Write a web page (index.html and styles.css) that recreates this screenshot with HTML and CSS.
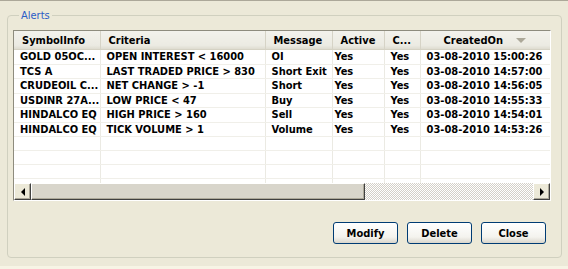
FILE: index.html
```html
<!DOCTYPE html>
<html lang="en">
<head>
  <meta charset="UTF-8">
  <title>Alerts</title>
  <link rel="stylesheet" href="styles.css">
</head>
<body>
  <div class="window">
    <fieldset class="group">
      <legend>Alerts</legend>
      <div class="grid">
        <div class="grid-body">
          <table class="alerts">
            <colgroup>
              <col class="c-sym"><col class="c-crit"><col class="c-msg"><col class="c-act"><col class="c-c"><col class="c-date">
            </colgroup>
            <thead>
              <tr>
                <th>SymbolInfo</th>
                <th>Criteria</th>
                <th>Message</th>
                <th class="center">Active</th>
                <th>C...</th>
                <th class="center">CreatedOn <span class="sort"></span></th>
              </tr>
            </thead>
            <tbody>
              <tr><td>GOLD 05OC...</td><td>OPEN INTEREST &lt; 16000</td><td>OI</td><td class="tight">Yes</td><td>Yes</td><td>03-08-2010 15:00:26</td></tr>
              <tr><td>TCS A</td><td>LAST TRADED PRICE &gt; 830</td><td>Short Exit</td><td class="tight">Yes</td><td>Yes</td><td>03-08-2010 14:57:00</td></tr>
              <tr><td>CRUDEOIL C...</td><td>NET CHANGE &gt; -1</td><td>Short</td><td class="tight">Yes</td><td>Yes</td><td>03-08-2010 14:56:05</td></tr>
              <tr><td>USDINR 27A...</td><td>LOW PRICE &lt; 47</td><td>Buy</td><td class="tight">Yes</td><td>Yes</td><td>03-08-2010 14:55:33</td></tr>
              <tr><td>HINDALCO EQ</td><td>HIGH PRICE &gt; 160</td><td>Sell</td><td class="tight">Yes</td><td>Yes</td><td>03-08-2010 14:54:01</td></tr>
              <tr><td>HINDALCO EQ</td><td>TICK VOLUME &gt; 1</td><td>Volume</td><td class="tight">Yes</td><td>Yes</td><td>03-08-2010 14:53:26</td></tr>
              <tr class="empty"><td></td><td></td><td></td><td></td><td></td><td></td></tr>
              <tr class="empty"><td></td><td></td><td></td><td></td><td></td><td></td></tr>
              <tr class="empty"><td></td><td></td><td></td><td></td><td></td><td></td></tr>
              <tr class="empty"><td></td><td></td><td></td><td></td><td></td><td></td></tr>
            </tbody>
          </table>
        </div>
        <div class="hscroll">
          <div class="sb-btn"><span class="arrow-left"></span></div>
          <div class="sb-thumb"></div>
          <div class="sb-track"></div>
          <div class="sb-btn"><span class="arrow-right"></span></div>
        </div>
      </div>
      <div class="actions">
        <button class="btn">Modify</button>
        <button class="btn">Delete</button>
        <button class="btn">Close</button>
      </div>
    </fieldset>
  </div>
</body>
</html>
```

FILE: styles.css
```css
body {
  margin: 0;
  background-color: #ece9d8;
  font-family: 'DejaVu Sans Condensed', 'DejaVu Sans', sans-serif;
  font-size: 11px;
  color: #000;
}
.window {
  height: 269px;
  box-sizing: border-box;
  border-top: 1px solid #aca899;
  border-bottom: 3px solid #f7f4e5;
  padding: 8px 10px 8px 7px;
}
.group {
  height: 100%;
  box-sizing: border-box;
  margin: 0;
  padding: 0 10px 0 5px;
  border: 1px solid #d0d0bf;
  border-radius: 4px;
  display: flex;
  flex-direction: column;
}
.group legend {
  color: #2a5cc6;
  padding: 0 2px;
  margin-left: 6px;
  line-height: 13px;
}
.grid {
  margin-top: 8px;
  border: 1px solid;
  border-color: #8e8c7e #fff #fff #8e8c7e;
  background: #fff;
  width: 536px;
}
.grid-body {
  height: 152px;
  overflow: hidden;
}
.alerts {
  border-collapse: collapse;
  table-layout: fixed;
  width: 536px;
  font-weight: bold;
}
.c-sym { width: 86px; }
.c-crit { width: 165px; }
.c-msg { width: 67px; }
.c-act { width: 52px; }
.c-c { width: 36px; }
.c-date { width: 130px; }
.alerts th {
  height: 17px;
  padding: 1px 0 0 8px;
  text-align: left;
  background: linear-gradient(#f3f2ec, #ebeae2 80%, #dedcd0);
  border-right: 1px solid #d6d3c6;
  border-bottom: 1px solid #d5d2c4;
  white-space: nowrap;
  overflow: hidden;
}
.alerts th.center {
  text-align: center;
  padding-left: 0;
}
.sort {
  display: inline-block;
  width: 0;
  height: 0;
  margin-left: 10px;
  border-left: 5px solid transparent;
  border-right: 5px solid transparent;
  border-top: 5px solid #aca899;
  vertical-align: 1px;
}
.alerts td {
  height: 13.5px;
  padding: 0 0 0 6px;
  border-right: 1px solid #ebeae3;
  border-bottom: 1px solid #f0efe9;
  white-space: nowrap;
  overflow: hidden;
  line-height: 13px;
}
.alerts td.tight {
  padding-left: 2px;
}
.alerts tr.empty td {
  height: 13px;
}
.hscroll {
  display: flex;
  height: 17px;
}
.sb-btn,
.sb-thumb {
  box-sizing: border-box;
  background: #ece9d8;
  border: 1px solid;
  border-color: #fff #404040 #404040 #fff;
  box-shadow: inset -1px -1px 0 #aca899;
}
.sb-btn {
  width: 17px;
  display: flex;
  align-items: center;
  justify-content: center;
}
.sb-thumb {
  width: 334px;
  background: #d8d5cb;
}
.sb-track {
  flex: 1;
  background: repeating-conic-gradient(#d4d0c8 0 25%, #fff 0 50%) 0 0 / 2px 2px;
}
.arrow-left,
.arrow-right {
  width: 0;
  height: 0;
  border-top: 4px solid transparent;
  border-bottom: 4px solid transparent;
}
.arrow-left { border-right: 4px solid #000; }
.arrow-right { border-left: 4px solid #000; }
.actions {
  display: flex;
  justify-content: flex-end;
  gap: 9px;
  margin-top: 21px;
  padding-right: 5px;
}
.btn {
  width: 65px;
  height: 22px;
  font-family: inherit;
  font-size: 11px;
  font-weight: bold;
  color: #000;
  border: 1px solid #003c74;
  border-radius: 3px;
  background: linear-gradient(#ffffff, #f4f3ee 70%, #d9d6cc);
}
```
